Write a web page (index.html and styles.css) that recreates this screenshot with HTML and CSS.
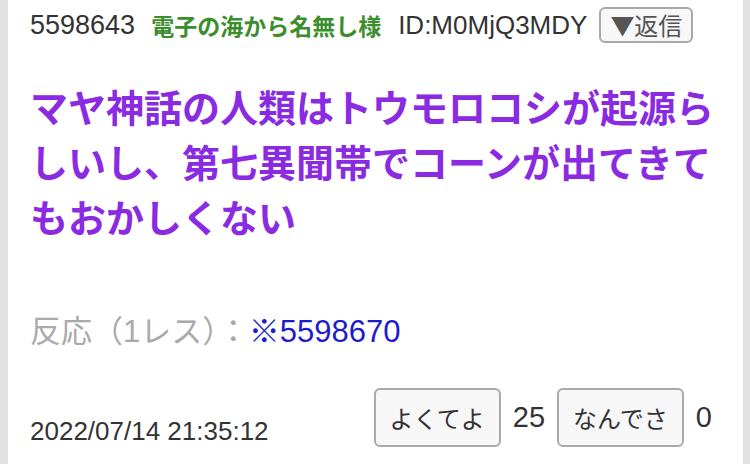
FILE: index.html
```html
<!DOCTYPE html>
<html lang="ja">
  <head>
    <meta charset="UTF-8" />
    <meta name="viewport" content="width=device-width, initial-scale=1.0" />
    <title>5598643</title>
    <link rel="stylesheet" href="styles.css">
  </head>
  <body>
    <div class="post">
      <div class="head">
        <span class="num">5598643</span>
        <span class="name">電子の海から名無し様</span>
        <span class="uid">ID:M0MjQ3MDY</span>
        <button class="reply">▼返信</button>
      </div>

      <p class="body">マヤ神話の人類はトウモロコシが起源らしいし、第七異聞帯でコーンが出てきてもおかしくない</p>

      <p class="res">反応（1レス）：<a href="#">※5598670</a></p>

      <div class="foot">
        <span class="date">2022/07/14 21:35:12</span>
        <div class="votes">
          <button class="vote">よくてよ</button>
          <span class="count">25</span>
          <button class="vote">なんでさ</button>
          <span class="count">0</span>
        </div>
      </div>
    </div>
  </body>
</html>
```

FILE: styles.css
```css
* {
  margin: 0;
  padding: 0;
  box-sizing: border-box;
}

html,
body {
  height: 100%;
}

body {
  background-color: #e2e2e2;
  font-family: "Liberation Sans", "Noto Sans CJK JP", sans-serif;
  color: #333;
}

.post {
  height: 100%;
  margin: 0 7px 0 8px;
  padding: 7px 22px 17px;
  background-color: #fff;
  display: flex;
  flex-direction: column;
}

.head {
  display: flex;
  align-items: center;
  height: 36px;
  font-size: 26px;
}

.num {
  font-size: 27px;
}

.name {
  margin-left: 16px;
  color: #3a8e2c;
  font-weight: bold;
  font-size: 23px;
}

.uid {
  margin-left: 17px;
}

button {
  font-family: "Noto Sans CJK JP", sans-serif;
  color: #333;
  background-color: #f7f7f7;
  border: 2px solid #a9a9a9;
  border-radius: 6px;
}

.reply {
  margin-left: 12px;
  height: 36px;
  padding: 0 9px;
  font-size: 24px;
  line-height: 1;
  color: #555;
}

.body {
  margin-top: 35px;
  font-family: "Noto Sans CJK JP", sans-serif;
  font-weight: bold;
  font-size: 38px;
  line-height: 55px;
  color: #8a2be2;
}

.res {
  margin-top: 70px;
  font-size: 31px;
  line-height: 38px;
  color: #aaa;
}

.res a {
  color: #1c1ccc;
  text-decoration: none;
}

.foot {
  margin-top: auto;
  display: flex;
  justify-content: space-between;
  align-items: flex-end;
  font-size: 26px;
}

.votes {
  display: flex;
  align-items: center;
  gap: 12px;
  margin-right: 9px;
}

.vote {
  height: 59px;
  padding: 0 14px;
  font-size: 24px;
}

.count {
  font-size: 29px;
}
```
